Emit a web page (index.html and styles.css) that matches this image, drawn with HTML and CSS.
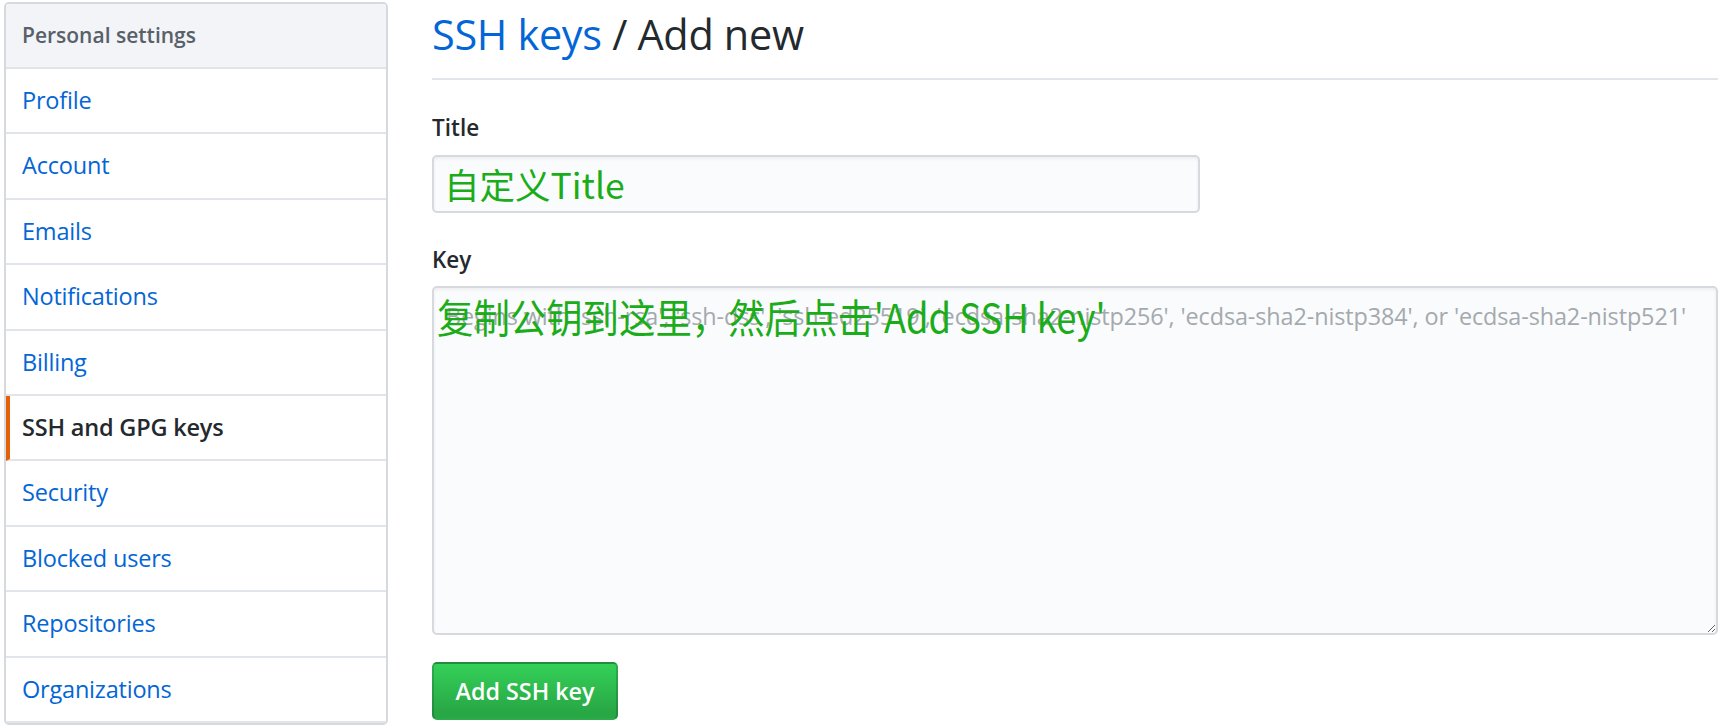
FILE: index.html
```html
<!DOCTYPE html>
<html lang="en">
<head>
<meta charset="utf-8">
<title>SSH keys / Add new</title>
<link rel="stylesheet" href="styles.css">
</head>
<body>
<div class="page">
  <nav class="menu">
    <div class="menu-heading">Personal settings</div>
    <a class="menu-item" href="#">Profile</a>
    <a class="menu-item" href="#">Account</a>
    <a class="menu-item" href="#">Emails</a>
    <a class="menu-item" href="#">Notifications</a>
    <a class="menu-item" href="#">Billing</a>
    <a class="menu-item selected" href="#">SSH and GPG keys</a>
    <a class="menu-item" href="#">Security</a>
    <a class="menu-item" href="#">Blocked users</a>
    <a class="menu-item" href="#">Repositories</a>
    <a class="menu-item" href="#">Organizations</a>
  </nav>
  <main class="main">
    <h2 class="subhead"><a href="#" class="crumb">SSH keys</a> / Add new</h2>
    <form class="form">
      <label class="label" for="title">Title</label>
      <input class="input title-input" id="title" type="text" value="自定义Title">
      <label class="label key-label" for="key">Key</label>
      <div class="key-wrap">
        <textarea class="input key-input" id="key" placeholder="Begins with 'ssh-rsa', 'ssh-dss', 'ssh-ed25519', 'ecdsa-sha2-nistp256', 'ecdsa-sha2-nistp384', or 'ecdsa-sha2-nistp521'"></textarea>
        <span class="note">复制公钥到这里，然后点击'Add SSH key'</span>
      </div>
      <div class="actions">
        <button type="button" class="btn">Add SSH key</button>
      </div>
    </form>
  </main>
</div>
</body>
</html>
```

FILE: styles.css
```css
html, body {
  margin: 0;
  padding: 0;
  background: #fff;
}
body {
  font-family: "Open Sans", "Noto Sans", "Noto Sans CJK SC", sans-serif;
  color: #24292e;
}
.page {
  display: flex;
  gap: 44px;
  padding: 2px 6px 0 4px;
}
.menu {
  width: 384px;
  flex: none;
  display: flex;
  flex-direction: column;
  border: 2px solid #d6d9dd;
  border-radius: 5px;
  box-sizing: border-box;
  align-self: flex-start;
}
.menu-heading {
  background: #f3f4f7;
  color: #586069;
  font-size: 21px;
  font-weight: 600;
  padding: 14px 16px;
  line-height: 35px;
  border-bottom: 2px solid #e1e4e8;
  border-radius: 4px 4px 0 0;
}
.menu-item {
  display: block;
  color: #0366d6;
  text-decoration: none;
  font-size: 23.5px;
  padding: 14px 16px;
  line-height: 35.4px;
  border-bottom: 2px solid #e1e4e8;
  letter-spacing: -0.2px;
}
.menu-item.selected {
  color: #24292e;
  font-weight: 600;
  border-left: 4px solid #e36209;
  padding-left: 12px;
}
.main {
  flex: 1;
  min-width: 0;
}
.subhead {
  margin: 0;
  font-size: 41.4px;
  font-weight: 400;
  line-height: 64px;
  padding-bottom: 12px;
  border-bottom: 2px solid #e1e4e8;
  color: #24292e;
  letter-spacing: -0.3px;
}
.crumb {
  color: #0366d6;
  text-decoration: none;
}
.form {
  display: flex;
  flex-direction: column;
  align-items: flex-start;
}
.label {
  font-size: 22.5px;
  font-weight: 600;
  line-height: 35px;
  margin-top: 30px;
  margin-bottom: 9.5px;
}
.key-label {
  margin-top: 29px;
}
.input {
  box-sizing: border-box;
  background: #fafbfc;
  border: 2px solid #d6d9dd;
  border-radius: 5px;
  box-shadow: inset 0 2px 3px rgba(27, 31, 35, 0.06);
  outline: none;
  margin: 0;
}
.title-input {
  width: 768px;
  height: 58px;
  padding: 0 10px;
  font-family: "Noto Sans CJK SC", sans-serif;
  font-size: 35.5px;
  color: #1aad19;
}
.key-wrap {
  position: relative;
  width: 100%;
}
.key-input {
  display: block;
  width: 100%;
  height: 349px;
  padding: 11px 12px;
  font-family: "Open Sans", "Noto Sans", sans-serif;
  font-size: 23.4px;
  line-height: 35px;
  letter-spacing: -0.1px;
  resize: vertical;
  color: #24292e;
}
.key-input::placeholder {
  color: #a4a9ae;
}
.note {
  position: absolute;
  left: 5px;
  top: 5px;
  font-family: "Noto Sans CJK SC", sans-serif;
  font-size: 40px;
  line-height: 50px;
  color: #1aad19;
  white-space: nowrap;
  transform: scaleX(0.91);
  transform-origin: left center;
  pointer-events: none;
}
.actions {
  margin-top: 27px;
}
.btn {
  box-sizing: border-box;
  height: 58px;
  width: 186px;
  padding: 0;
  font-family: "Open Sans", "Noto Sans", sans-serif;
  font-size: 23.3px;
  font-weight: 600;
  color: #fff;
  background: linear-gradient(#34d058, #28a745 90%);
  border: 2px solid rgba(27, 31, 35, 0.2);
  border-radius: 5px;
  cursor: pointer;
}
```
